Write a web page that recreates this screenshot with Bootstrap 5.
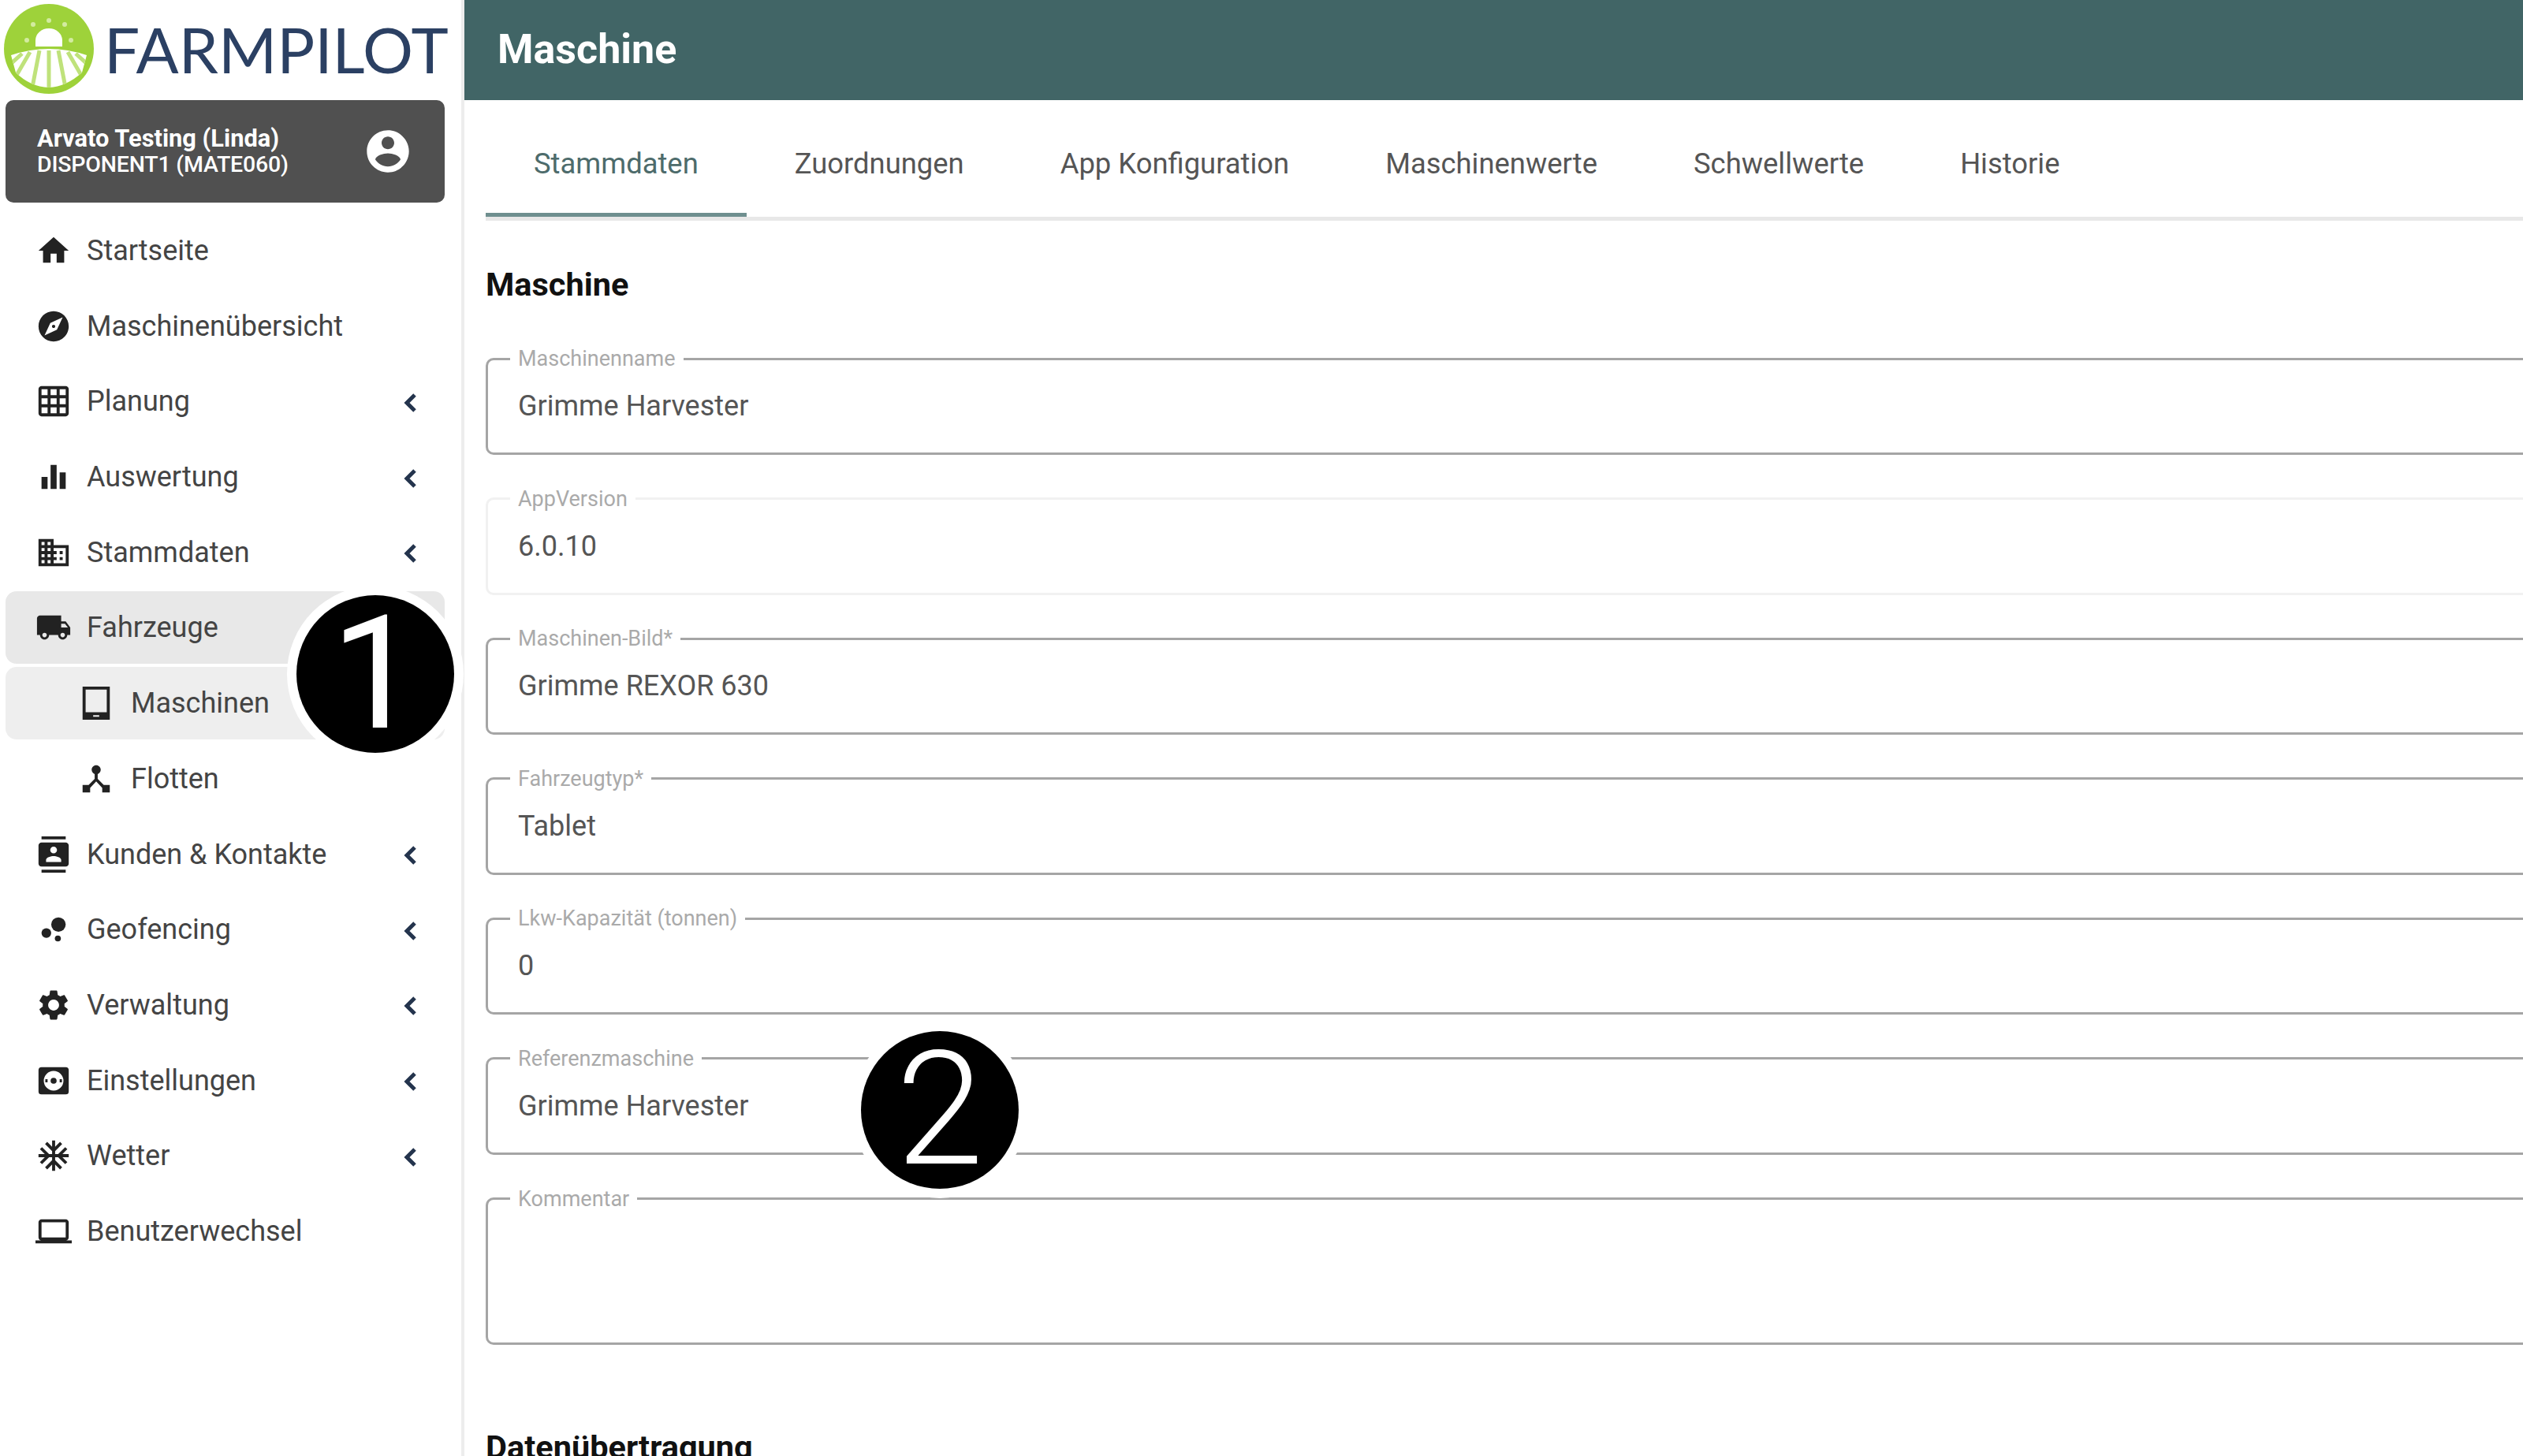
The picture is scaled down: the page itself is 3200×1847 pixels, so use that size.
<!DOCTYPE html>
<html lang="de">
<head>
  <meta charset="UTF-8" />
  <meta name="viewport" content="width=device-width, initial-scale=1.0" />
  <title>Farmpilot Maschine</title>
  <link href="https://cdn.jsdelivr.net/npm/bootstrap@5.3.0/dist/css/bootstrap.min.css" rel="stylesheet" />
  <style>
    html, body { height: 100%; overflow: hidden; }
    body { font-family: Roboto, "Liberation Sans", sans-serif; color: #444; background: #fff; }
    .fp-shell { height: 1847px; }
    .fp-side { width: 589px; flex: none; border-right: 4px solid #ededed; position: relative; }
    .fp-brand { height: 127px; padding: 0 0 3px 4px; gap: 12px; }
    .fp-brand-name { font-family: Lato, sans-serif; font-weight: 400; font-size: 80px; line-height: 1; color: #2b4063; }
    .fp-user { margin: 0 21px 0 7px; height: 130px; background: #505050; border-radius: 10px; padding: 0 40px; color: #fff; }
    .fp-user-name { font-size: 30.8px; font-weight: 700; line-height: 34px; }
    .fp-user-role { font-size: 28.5px; font-weight: 500; line-height: 32px; letter-spacing: -.2px; }
    .fp-menu { margin-top: 15px; }
    .fp-item { height: 92px; margin: 0 21px 3.7px 7px; padding: 0 35px 0 38px; color: #444; font-size: 36px; gap: 19px; border-radius: 14px; }
    .fp-item:hover { color: #444; }
    .fp-item svg { width: 46px; height: 46px; fill: #222; flex: none; }
    .fp-sub { padding-left: 92px; gap: 21px; }
    .fp-open { background: #e8e8e8; }
    .fp-current { background: #eeeeee; }
    .fp-chev { margin: 3px 0 0 auto; width: 18px !important; height: 26px !important; fill: none !important; stroke: #24344d; stroke-width: 5; }
    .fp-marker { position: absolute; width: 200px; height: 200px; border-radius: 50%; background: #000; color: #fff; font-family: Roboto, sans-serif; font-weight: 300; font-size: 200px; line-height: 200px; text-align: center; box-shadow: 0 0 0 12px #fff; z-index: 5; }
    .fp-marker-one { left: 376px; top: 755px; font-weight: 400; }
    .fp-marker-two { left: 1092px; top: 1308px; }
    .fp-head { height: 127px; background: #416566; color: #fff; font-size: 52px; font-weight: 700; padding: 0 0 2px 42px; }
    .fp-body { padding: 14px 0 0 27px; }
    .fp-tabs { border-bottom: 5px solid #e8e8e8; }
    .fp-tabs .nav-link { color: #555; font-size: 36.4px; padding: 0 61px; height: 134px; line-height: 134px; border-radius: 0; }
    .fp-tabs .nav-link.active { color: #4d6b6b; border-bottom: 5px solid #6f8f8f; }
    .fp-title { font-size: 41.5px; font-weight: 700; color: #111; line-height: 50px; margin: 0; }
    .fp-title-first { margin: 56px 0 57px; }
    .fp-title-next { margin-top: 105px; }
    .fp-field { margin: 0 -30px 43.6px 0; min-height: 134px; border: 3px solid #a5a5a5; border-radius: 10px; padding: 0 38px; }
    .fp-field legend { float: none; width: auto; margin: 0 0 0 -10px; padding: 0 10px; font-size: 27px; line-height: 24px; color: #aaa; }
    .fp-field-off { border-color: #f1f1f1; }
    .fp-field-tall { min-height: 197px; }
    .fp-value { font-size: 36px; line-height: 48px; color: #555; padding-top: 24px; }
  </style>
</head>
<body>
  <div class="fp-shell d-flex">
    <aside class="fp-side">
      <div class="fp-brand d-flex align-items-center">
        <svg width="116" height="116" viewBox="0 0 116 116">
          <defs><clipPath id="fpField"><path d="M10 66Q58 50 106 66L100 88Q80 106 58 107Q34 106 16 88Z"/></clipPath></defs>
          <circle cx="58" cy="58" r="57" fill="#9ed23a"/>
          <path d="M41 55V47A17 15 0 0 1 75 47V55Z" fill="#fff"/>
          <g fill="#d3eba0"><circle cx="58" cy="22" r="3"/><circle cx="38" cy="27" r="3"/><circle cx="78" cy="27" r="3"/><circle cx="30" cy="47" r="3"/><circle cx="86" cy="47" r="3"/></g>
          <g clip-path="url(#fpField)">
            <rect x="0" y="50" width="116" height="66" fill="#fff"/>
            <path d="M58 60V112M46 60L36 112M70 60L80 112M34 62L12 100M82 62L104 100M24 64L2 84M92 64L114 84" stroke="#bfe27b" stroke-width="5" fill="none"/>
          </g>
        </svg>
        <span class="fp-brand-name">FARMPILOT</span>
      </div>
      <div class="fp-user d-flex align-items-center justify-content-between">
        <div>
          <div class="fp-user-name">Arvato Testing (Linda)</div>
          <div class="fp-user-role">DISPONENT1 (MATE060)</div>
        </div>
        <svg width="64" height="64" viewBox="0 0 24 24" fill="#fff"><path d="M12 2C6.48 2 2 6.48 2 12s4.48 10 10 10 10-4.48 10-10S17.52 2 12 2zm0 3c1.66 0 3 1.34 3 3s-1.34 3-3 3-3-1.34-3-3 1.34-3 3-3zm0 14.2c-2.5 0-4.71-1.28-6-3.22.03-1.99 4-3.08 6-3.08 1.99 0 5.97 1.09 6 3.08-1.29 1.94-3.5 3.22-6 3.22z"/></svg>
      </div>
      <nav class="fp-menu nav flex-column">
        <a class="fp-item nav-link d-flex align-items-center" href="#">
          <svg viewBox="0 0 24 24"><path d="M10 20v-6h4v6h5v-8h3L12 3 2 12h3v8z"/></svg>Startseite
        </a>
        <a class="fp-item nav-link d-flex align-items-center" href="#">
          <svg viewBox="0 0 24 24"><path d="M12 10.9c-.61 0-1.1.49-1.1 1.1s.49 1.1 1.1 1.1c.61 0 1.1-.49 1.1-1.1s-.49-1.1-1.1-1.1zM12 2C6.48 2 2 6.48 2 12s4.48 10 10 10 10-4.48 10-10S17.52 2 12 2zm2.19 12.19L6 18l3.81-8.19L18 6l-3.81 8.19z"/></svg>Maschinenübersicht
        </a>
        <a class="fp-item nav-link d-flex align-items-center" href="#">
          <svg viewBox="0 0 24 24"><path d="M20 2H4c-1.1 0-2 .9-2 2v16c0 1.1.9 2 2 2h16c1.1 0 2-.9 2-2V4c0-1.1-.9-2-2-2zM8 20H4v-4h4v4zm0-6H4v-4h4v4zm0-6H4V4h4v4zm6 12h-4v-4h4v4zm0-6h-4v-4h4v4zm0-6h-4V4h4v4zm6 12h-4v-4h4v4zm0-6h-4v-4h4v4zm0-6h-4V4h4v4z"/></svg>Planung
          <svg class="fp-chev" viewBox="0 0 18 26"><path d="M15 3L5 13l10 10"/></svg>
        </a>
        <a class="fp-item nav-link d-flex align-items-center" href="#">
          <svg viewBox="0 0 24 24"><path d="M10 20h4V4h-4v16zm-6 0h4v-8H4v8zM16 9v11h4V9h-4z"/></svg>Auswertung
          <svg class="fp-chev" viewBox="0 0 18 26"><path d="M15 3L5 13l10 10"/></svg>
        </a>
        <a class="fp-item nav-link d-flex align-items-center" href="#">
          <svg viewBox="0 0 24 24"><path d="M12 7V3H2v18h20V7H12zM6 19H4v-2h2v2zm0-4H4v-2h2v2zm0-4H4V9h2v2zm0-4H4V5h2v2zm4 12H8v-2h2v2zm0-4H8v-2h2v2zm0-4H8V9h2v2zm0-4H8V5h2v2zm10 12h-8v-2h2v-2h-2v-2h2v-2h-2V9h8v10zm-2-8h-2v2h2v-2zm0 4h-2v2h2v-2z"/></svg>Stammdaten
          <svg class="fp-chev" viewBox="0 0 18 26"><path d="M15 3L5 13l10 10"/></svg>
        </a>
        <a class="fp-item fp-open nav-link d-flex align-items-center" href="#">
          <svg viewBox="0 0 24 24"><path d="M20 8h-3V4H3c-1.1 0-2 .9-2 2v11h2c0 1.66 1.34 3 3 3s3-1.34 3-3h6c0 1.66 1.34 3 3 3s3-1.34 3-3h2v-5l-3-4zM6 18.5c-.83 0-1.5-.67-1.5-1.5s.67-1.5 1.5-1.5 1.5.67 1.5 1.5-.67 1.5-1.5 1.5zm13.5-9l1.96 2.5H17V9.5h2.5zm-1.5 9c-.83 0-1.5-.67-1.5-1.5s.67-1.5 1.5-1.5 1.5.67 1.5 1.5-.67 1.5-1.5 1.5z"/></svg>Fahrzeuge
        </a>
        <a class="fp-item fp-sub fp-current nav-link d-flex align-items-center" href="#">
          <svg viewBox="0 0 24 24"><path fill-rule="evenodd" d="M3 1h18v22H3zM5 3v15h14V3zM10 20v1h4v-1z"/></svg>Maschinen
        </a>
        <a class="fp-item fp-sub nav-link d-flex align-items-center" href="#">
          <svg viewBox="0 0 24 24"><path d="M17 16l-4-4V8.82C14.16 8.4 15 7.3 15 6c0-1.66-1.34-3-3-3S9 4.34 9 6c0 1.3.84 2.4 2 2.82V12l-4 4H3v5h5v-3.05l4-4.2 4 4.2V21h5v-5h-4z"/></svg>Flotten
        </a>
        <a class="fp-item nav-link d-flex align-items-center" href="#">
          <svg viewBox="0 0 24 24"><path d="M20 0H4v2h16V0zM4 24h16v-2H4v2zM20 4H4c-1.1 0-2 .9-2 2v12c0 1.1.9 2 2 2h16c1.1 0 2-.9 2-2V6c0-1.1-.9-2-2-2zm-8 2.75c1.24 0 2.25 1.01 2.25 2.25s-1.01 2.25-2.25 2.25S9.75 10.24 9.75 9 10.76 6.75 12 6.75zM17 17H7v-1.5c0-1.67 3.33-2.5 5-2.5s5 .83 5 2.5V17z"/></svg>Kunden &amp; Kontakte
          <svg class="fp-chev" viewBox="0 0 18 26"><path d="M15 3L5 13l10 10"/></svg>
        </a>
        <a class="fp-item nav-link d-flex align-items-center" href="#">
          <svg viewBox="0 0 24 24"><circle cx="7.2" cy="14.4" r="3.2"/><circle cx="14.8" cy="18" r="2"/><circle cx="15.2" cy="8.8" r="4.8"/></svg>Geofencing
          <svg class="fp-chev" viewBox="0 0 18 26"><path d="M15 3L5 13l10 10"/></svg>
        </a>
        <a class="fp-item nav-link d-flex align-items-center" href="#">
          <svg viewBox="0 0 24 24"><path d="M19.14 12.94c.04-.3.06-.61.06-.94 0-.32-.02-.64-.07-.94l2.03-1.58c.18-.14.23-.41.12-.61l-1.92-3.32c-.12-.22-.37-.29-.59-.22l-2.39.96c-.5-.38-1.03-.7-1.62-.94l-.36-2.54c-.04-.24-.24-.41-.48-.41h-3.84c-.24 0-.43.17-.47.41l-.36 2.54c-.59.24-1.13.57-1.62.94l-2.39-.96c-.22-.08-.47 0-.59.22L2.74 8.87c-.12.21-.08.47.12.61l2.03 1.58c-.05.3-.09.63-.09.94s.02.64.07.94l-2.03 1.58c-.18.14-.23.41-.12.61l1.92 3.32c.12.22.37.29.59.22l2.39-.96c.5.38 1.03.7 1.62.94l.36 2.54c.05.24.24.41.48.41h3.84c.24 0 .44-.17.47-.41l.36-2.54c.59-.24 1.13-.56 1.62-.94l2.39.96c.22.08.47 0 .59-.22l1.92-3.32c.12-.22.07-.47-.12-.61l-2.01-1.58zM12 15.6c-1.98 0-3.6-1.62-3.6-3.6s1.62-3.6 3.6-3.6 3.6 1.62 3.6 3.6-1.62 3.6-3.6 3.6z"/></svg>Verwaltung
          <svg class="fp-chev" viewBox="0 0 18 26"><path d="M15 3L5 13l10 10"/></svg>
        </a>
        <a class="fp-item nav-link d-flex align-items-center" href="#">
          <svg viewBox="0 0 24 24"><path fill-rule="evenodd" d="M4 3h16a2 2 0 0 1 2 2v14a2 2 0 0 1-2 2H4a2 2 0 0 1-2-2V5a2 2 0 0 1 2-2zm8 2.500a6.500 6.500 0 1 0 0 13 6.500 6.500 0 0 0 0-13zm0 4.500a2 2 0 1 1 0 4 2 2 0 0 1 0-4z"/><path d="M6.500 11h1.500v2H6.500zM16 11h1.500v2H16z"/></svg>Einstellungen
          <svg class="fp-chev" viewBox="0 0 18 26"><path d="M15 3L5 13l10 10"/></svg>
        </a>
        <a class="fp-item nav-link d-flex align-items-center" href="#">
          <svg viewBox="0 0 24 24"><path d="M22 11h-4.170l3.240-3.240-1.410-1.420L15 11h-2V9l4.660-4.660-1.420-1.410L13 6.170V2h-2v4.170L7.760 2.930 6.340 4.340 11 9v2H9L4.340 6.340 2.930 7.760 6.170 11H2v2h4.170l-3.240 3.240 1.410 1.420L9 13h2v2l-4.660 4.660 1.420 1.410L11 17.830V22h2v-4.170l3.240 3.240 1.420-1.410L13 15v-2h2l4.660 4.660 1.410-1.420L17.830 13H22z"/></svg>Wetter
          <svg class="fp-chev" viewBox="0 0 18 26"><path d="M15 3L5 13l10 10"/></svg>
        </a>
        <a class="fp-item nav-link d-flex align-items-center" href="#">
          <svg viewBox="0 0 24 24"><path d="M20 18c1.100 0 1.990-.9 1.990-2L22 6c0-1.100-.9-2-2-2H4c-1.100 0-2 .9-2 2v10c0 1.100.9 2 2 2H0v2h24v-2h-4zM4 6h16v10H4V6z"/></svg>Benutzerwechsel
        </a>
      </nav>
      <div class="fp-marker fp-marker-one">1</div>
    </aside>
    <main class="flex-grow-1 overflow-hidden">
      <div class="fp-head d-flex align-items-center">Maschine</div>
      <div class="fp-body">
        <ul class="fp-tabs nav">
          <li class="nav-item"><a class="nav-link active" href="#">Stammdaten</a></li>
          <li class="nav-item"><a class="nav-link" href="#">Zuordnungen</a></li>
          <li class="nav-item"><a class="nav-link" href="#">App Konfiguration</a></li>
          <li class="nav-item"><a class="nav-link" href="#">Maschinenwerte</a></li>
          <li class="nav-item"><a class="nav-link" href="#">Schwellwerte</a></li>
          <li class="nav-item"><a class="nav-link" href="#">Historie</a></li>
        </ul>
        <h2 class="fp-title fp-title-first">Maschine</h2>
        <fieldset class="fp-field"><legend>Maschinenname</legend><div class="fp-value">Grimme Harvester</div></fieldset>
        <fieldset class="fp-field fp-field-off"><legend>AppVersion</legend><div class="fp-value">6.0.10</div></fieldset>
        <fieldset class="fp-field"><legend>Maschinen-Bild*</legend><div class="fp-value">Grimme REXOR 630</div></fieldset>
        <fieldset class="fp-field"><legend>Fahrzeugtyp*</legend><div class="fp-value">Tablet</div></fieldset>
        <fieldset class="fp-field"><legend>Lkw-Kapazität (tonnen)</legend><div class="fp-value">0</div></fieldset>
        <fieldset class="fp-field"><legend>Referenzmaschine</legend><div class="fp-value">Grimme Harvester</div></fieldset>
        <fieldset class="fp-field fp-field-tall"><legend>Kommentar</legend></fieldset>
        <h2 class="fp-title fp-title-next">Datenübertragung</h2>
      </div>
    </main>
  </div>
  <div class="fp-marker fp-marker-two">2</div>
  <script src="https://cdn.jsdelivr.net/npm/bootstrap@5.3.0/dist/js/bootstrap.bundle.min.js"></script>
</body>
</html>
